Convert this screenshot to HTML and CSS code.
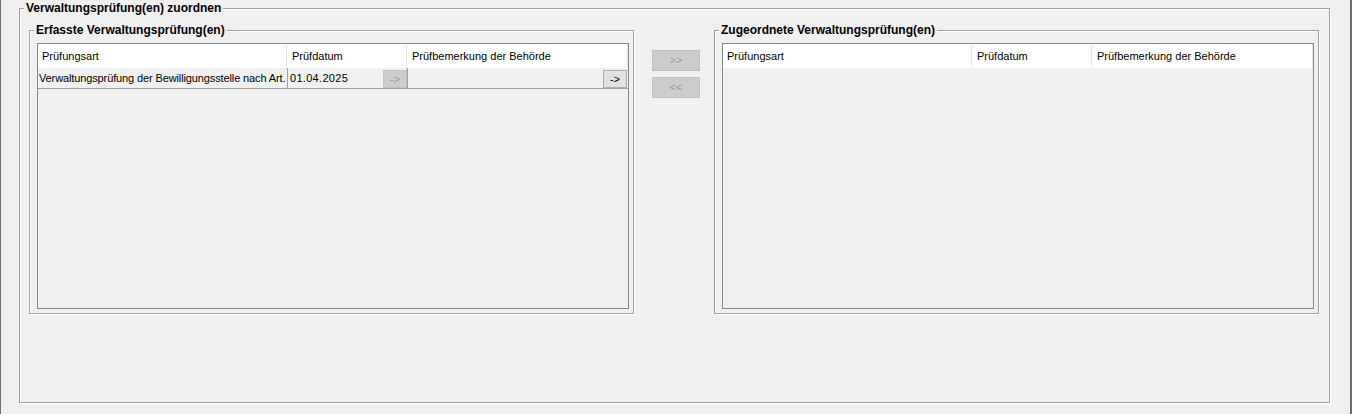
FILE: index.html
```html
<!DOCTYPE html>
<html lang="de">
<head>
<meta charset="utf-8">
<title>Verwaltungsprüfung(en) zuordnen</title>
<link rel="stylesheet" href="styles.css">
</head>
<body>
<div class="window">
  <div class="group outer">
    <span class="legend">Verwaltungsprüfung(en) zuordnen</span>
    <div class="row">
      <div class="group sub">
        <span class="legend">Erfasste Verwaltungsprüfung(en)</span>
        <div class="table">
          <div class="thead">
            <div class="th c1">Prüfungsart</div>
            <div class="th c2">Prüfdatum</div>
            <div class="th c3">Prüfbemerkung der Behörde</div>
          </div>
          <div class="trow">
            <div class="td d1"><span class="art">Verwaltungsprüfung der Bewilligungsstelle nach Art.</span></div>
            <div class="td d2"><span class="date">01.04.2025</span><button class="btn small" disabled>-&gt;</button></div>
            <div class="td d3"><button class="btn small active">-&gt;</button></div>
          </div>
        </div>
      </div>
      <div class="mover">
        <button class="btn move" disabled>&gt;&gt;</button>
        <button class="btn move" disabled>&lt;&lt;</button>
      </div>
      <div class="group sub">
        <span class="legend">Zugeordnete Verwaltungsprüfung(en)</span>
        <div class="table">
          <div class="thead">
            <div class="th c1">Prüfungsart</div>
            <div class="th c2">Prüfdatum</div>
            <div class="th c3">Prüfbemerkung der Behörde</div>
          </div>
        </div>
      </div>
    </div>
  </div>
</div>
</body>
</html>
```

FILE: styles.css
```css
* { box-sizing: border-box; }

html, body {
  margin: 0;
  padding: 0;
  background: #f0f0f0;
}

body {
  font-family: "Liberation Sans", Arial, sans-serif;
  font-size: 11px;
  color: #000;
  width: 1352px;
  height: 414px;
  overflow: hidden;
}

.window {
  width: 1352px;
  height: 414px;
  border-left: 1px solid #6b6b6b;
  border-right: 2px solid #6b6b6b;
  padding: 8px 0 0 18px;
}

.group {
  position: relative;
  border: 1px solid #a0a0a0;
  box-shadow: inset 1px 1px 0 #fff, 1px 1px 0 #fff;
}

.legend {
  position: absolute;
  top: -9px;
  height: 16px;
  line-height: 16px;
  padding: 0 2px 0 2px;
  background: #f0f0f0;
  font-weight: bold;
  font-size: 12px;
  white-space: nowrap;
}

.outer {
  width: 1311px;
  height: 395px;
  padding: 21px 0 0 9px;
}

.outer > .legend { left: 4px; }
.sub > .legend { left: 4px; }

.row {
  display: flex;
  align-items: flex-start;
}

.sub {
  width: 605px;
  height: 284px;
  padding: 12px 0 0 7px;
}

.mover {
  display: flex;
  flex-direction: column;
  gap: 6px;
  margin: 20px 14px 0 18px;
}

.btn {
  font-family: "Liberation Sans", Arial, sans-serif;
  font-size: 11px;
  padding: 0;
  margin: 0;
  border: 1px solid #bfbfbf;
  background: #cccccc;
  color: #9a9a9a;
  line-height: 1;
  display: flex;
  align-items: center;
  justify-content: center;
  flex: none;
}

.btn.active {
  border-color: #adadad;
  background: #e1e1e1;
  color: #000;
}

.move {
  width: 48px;
  height: 21px;
}

.small {
  width: 24px;
  height: 18px;
}

.table {
  width: 592px;
  height: 266px;
  border: 1px solid #828790;
  background: #f0f0f0;
}

.thead {
  display: flex;
  height: 24px;
  background: #fff;
}

.th {
  display: flex;
  align-items: center;
  padding-left: 4px;
  border-right: 1px solid #e5e5e5;
  white-space: nowrap;
}

.th.c1 { width: 249px; }
.th.c2 { width: 120px; padding-left: 5px; }
.th.c3 { width: 221px; padding-left: 5px; }

.trow {
  display: flex;
  height: 21px;
  border-bottom: 1px solid #a0a0a0;
}

.td {
  display: flex;
  align-items: center;
  white-space: nowrap;
  overflow: hidden;
  border-right: 1px solid #a0a0a0;
}

.td.d1 {
  width: 250px;
  padding-left: 1px;
}

.td.d1 .art {
  letter-spacing: -0.12px;
}

.td.d2 {
  width: 120px;
  padding-left: 2px;
  align-items: flex-end;
}

.td.d2 .date {
  flex: 1;
  align-self: center;
  letter-spacing: 0.3px;
}

.td.d3 {
  flex: 1;
  border-right: 0;
  justify-content: flex-end;
  align-items: flex-end;
  padding-right: 1px;
}
```
